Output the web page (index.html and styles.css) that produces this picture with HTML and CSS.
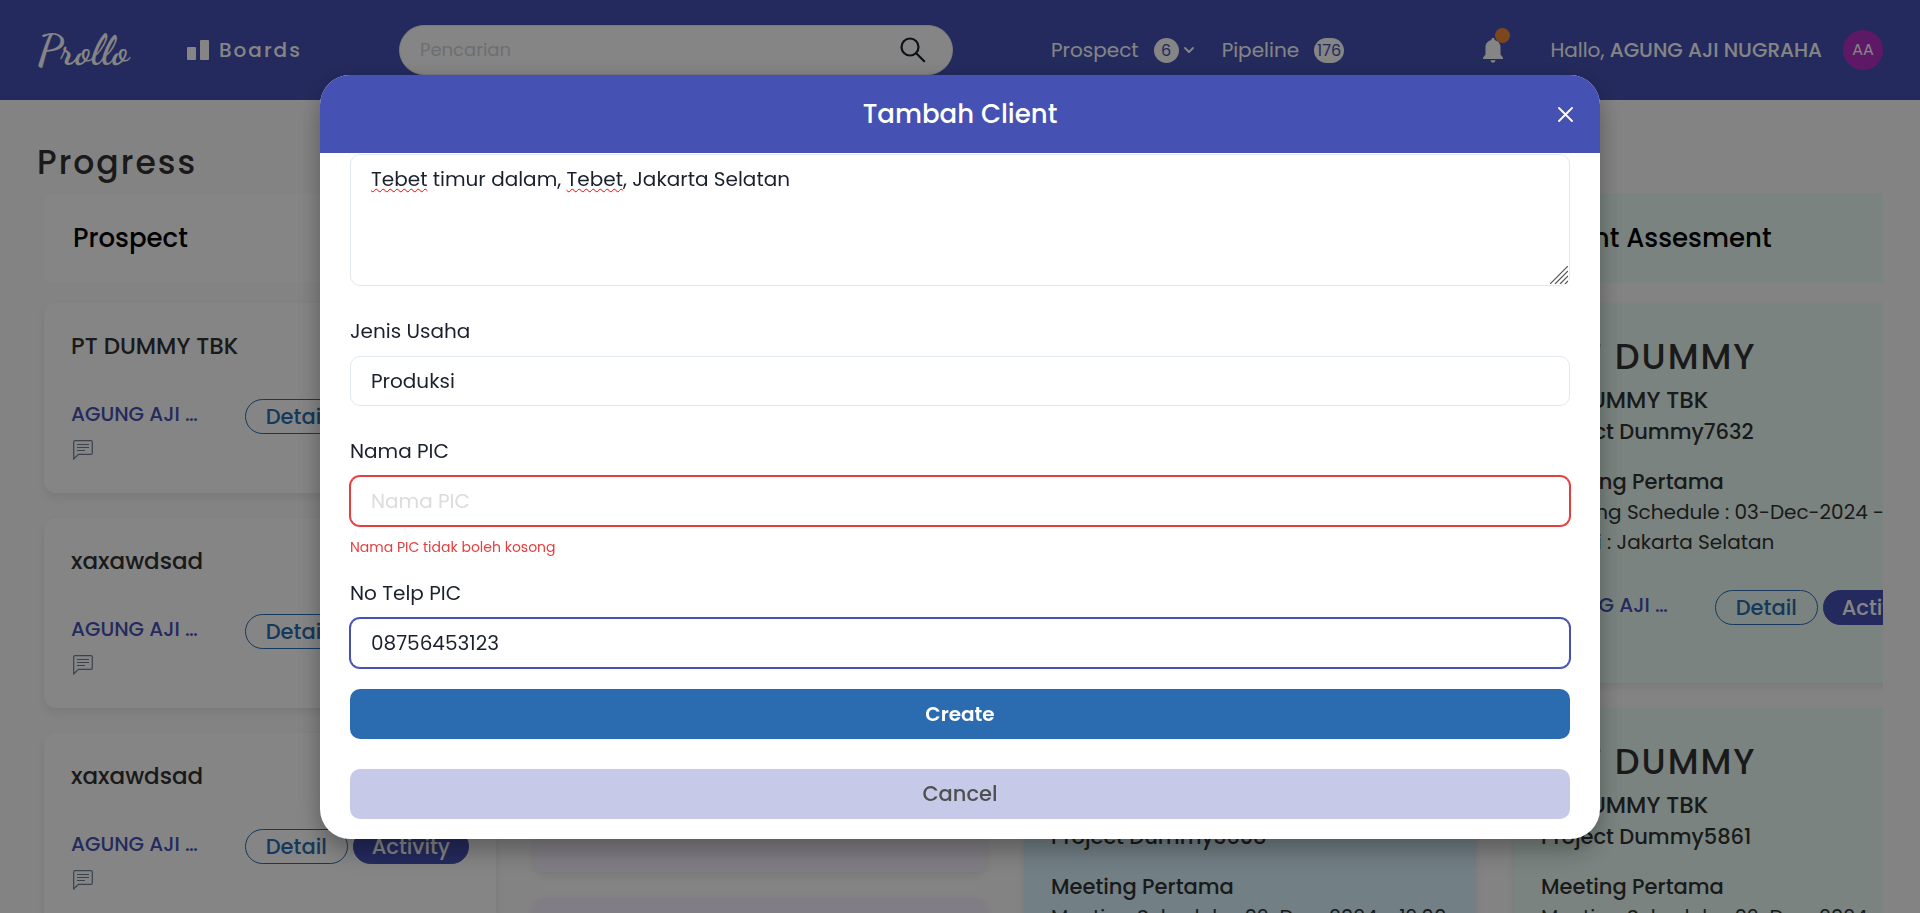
FILE: index.html
```html
<!DOCTYPE html>
<html lang="id">
<head>
<meta charset="utf-8">
<meta name="viewport" content="width=device-width, initial-scale=1">
<title>Prollo</title>
<link rel="stylesheet" href="styles.css">
</head>
<body>
<svg class="sprite" aria-hidden="true">
  <symbol id="comment" viewBox="0 0 20 20">
    <path d="M.7 19V2Q.7.7 2 .7h16q1.300 0 1.300 1.300v11q0 1.300-1.300 1.300H5.500z" fill="none" stroke="currentColor" stroke-width="1.200"/>
    <path d="M4 4.500h12M4 7.500h12M4 10.500h8" stroke="currentColor" stroke-width="1.200"/>
  </symbol>
</svg>

<header class="nav">
  <a class="logo" href="#">Prollo</a>
  <a class="boards" href="#">
    <svg width="22" height="20" viewBox="0 0 22 20" fill="currentColor" aria-hidden="true"><rect x="0" y="7" width="9" height="13" rx="1"/><rect x="13" y="0" width="9" height="20" rx="1"/></svg>
    Boards
  </a>
  <form class="search">
    <input type="search" placeholder="Pencarian" aria-label="Pencarian">
    <button type="button" aria-label="Cari">
      <svg width="26" height="26" viewBox="0 0 26 26" fill="none" stroke="currentColor" stroke-width="2.200" stroke-linecap="round" aria-hidden="true"><circle cx="10" cy="10" r="8.500"/><path d="M16.200 16.200l8 8"/></svg>
    </button>
  </form>
  <nav class="links">
    <a href="#">Prospect <span class="count">6</span>
      <svg width="10" height="6" viewBox="0 0 10 6" fill="none" stroke="currentColor" stroke-width="1.800" stroke-linecap="round" stroke-linejoin="round" aria-hidden="true"><path d="M1 1l4 4 4-4"/></svg>
    </a>
    <a href="#">Pipeline <span class="count">176</span></a>
  </nav>
  <div class="account">
    <button class="bell" type="button" aria-label="Notifikasi">
      <svg width="20" height="25" viewBox="0 0 20 25" fill="currentColor" aria-hidden="true"><path d="M10 0c1 0 1.700.7 1.700 1.700v.2C15 2.700 17.500 5.500 17.500 9v7.500l2 2.500q.5.500.5 2H0q0-1.500.500-2l2-2.500V9C2.500 5.500 5 2.700 8.300 1.900v-.2C8.300.7 9 0 10 0zM7.600 22.300h4.800c0 1.500-1 2.500-2.400 2.500s-2.400-1-2.400-2.500z"/></svg>
      <span class="dot"></span>
    </button>
    <span class="hello">Hallo, <b>AGUNG AJI NUGRAHA</b></span>
    <span class="avatar">AA</span>
  </div>
</header>

<main class="page">
  <h1>Progress</h1>
  <div class="board">
    <section class="col">
      <h2>Prospect</h2>
      <article class="card">
        <h4>PT DUMMY TBK</h4>
        <div class="row"><a href="#">AGUNG AJI …</a><button class="pill">Detail</button><button class="pill solid">Activity</button></div>
        <svg class="note" width="20" height="20"><use href="#comment"/></svg>
      </article>
      <article class="card">
        <h4>xaxawdsad</h4>
        <div class="row"><a href="#">AGUNG AJI …</a><button class="pill">Detail</button><button class="pill solid">Activity</button></div>
        <svg class="note" width="20" height="20"><use href="#comment"/></svg>
      </article>
      <article class="card">
        <h4>xaxawdsad</h4>
        <div class="row"><a href="#">AGUNG AJI …</a><button class="pill">Detail</button><button class="pill solid">Activity</button></div>
        <svg class="note" width="20" height="20"><use href="#comment"/></svg>
      </article>
    </section>
    <section class="col purple">
      <h2></h2>
      <article class="card medium"><svg class="note" width="20" height="20"><use href="#comment"/></svg></article>
      <article class="card medium"><svg class="note" width="20" height="20"><use href="#comment"/></svg></article>
      <article class="card medium"></article>
    </section>
    <section class="col blue">
      <h2></h2>
      <article class="card tall"></article>
      <article class="card tall">
        <h3>PT DUMMY</h3>
        <h4>PT DUMMY TBK</h4>
        <p class="project">Project Dummy3608</p>
        <h5>Meeting Pertama</h5>
        <p>Meeting Schedule : 02-Dec-2024 - 12:00</p>
      </article>
    </section>
    <section class="col green">
      <h2>Client Assesment</h2>
      <article class="card tall">
        <h3>PT DUMMY</h3>
        <h4>PT DUMMY TBK</h4>
        <p class="project">Project Dummy7632</p>
        <h5>Meeting Pertama</h5>
        <p>Meeting Schedule : 03-Dec-2024 - 12:00</p>
        <p>Lokasi : Jakarta Selatan</p>
        <div class="row"><a href="#">AGUNG AJI …</a><button class="pill">Detail</button><button class="pill solid">Activity</button></div>
      </article>
      <article class="card tall">
        <h3>PT DUMMY</h3>
        <h4>PT DUMMY TBK</h4>
        <p class="project">Project Dummy5861</p>
        <h5>Meeting Pertama</h5>
        <p>Meeting Schedule : 02-Dec-2024 - 12:00</p>
      </article>
    </section>
  </div>
</main>

<div class="overlay">
  <div class="modal" role="dialog" aria-modal="true" aria-labelledby="modal-title">
    <div class="modal-head">
      <h2 id="modal-title">Tambah Client</h2>
      <button class="close" type="button" aria-label="Tutup">
        <svg width="15" height="15" viewBox="0 0 15 15" stroke="currentColor" stroke-width="1.800" stroke-linecap="round" aria-hidden="true"><path d="M1 1l13 13M14 1L1 14"/></svg>
      </button>
    </div>
    <form class="modal-body">
      <div class="field area">
        <textarea aria-label="Alamat">Tebet timur dalam, Tebet, Jakarta Selatan</textarea>
        <div class="spelling" aria-hidden="true"><u>Tebet</u> timur dalam, <u>Tebet</u>, Jakarta Selatan</div>
        <svg class="grip" width="18" height="18" viewBox="0 0 18 18" stroke="currentColor" stroke-width="1.200" aria-hidden="true"><path d="M0 18L18 0M5 18L18 5M10 18l8-8M15 18l3-3"/></svg>
      </div>
      <div class="field">
        <label for="usaha">Jenis Usaha</label>
        <input id="usaha" type="text" value="Produksi">
      </div>
      <div class="field invalid">
        <label for="pic">Nama PIC</label>
        <input id="pic" type="text" placeholder="Nama PIC" aria-invalid="true" aria-describedby="pic-error">
        <p id="pic-error" class="error">Nama PIC tidak boleh kosong</p>
      </div>
      <div class="field current">
        <label for="telp">No Telp PIC</label>
        <input id="telp" type="tel" value="08756453123">
      </div>
      <div class="actions">
        <button class="create" type="button">Create</button>
        <button class="cancel" type="button">Cancel</button>
      </div>
    </form>
  </div>
</div>
</body>
</html>
```
FILE: styles.css
```css
* { box-sizing: border-box; margin: 0; }

body {
  height: 100vh;
  overflow: hidden;
  background: #fbfbfb;
  color: #323232;
  font: 400 20px/30px Poppins, Inter, sans-serif;
}

a { color: inherit; text-decoration: none; }
button, input, textarea { font: inherit; color: inherit; }
button { border: 0; padding: 0; background: none; }
.sprite { display: none; }
svg { flex: none; }

/* Navigation */
.nav {
  display: flex;
  align-items: center;
  height: 100px;
  padding: 0 37px;
  background: #4551b3;
  color: #fff;
}
.logo {
  width: 150px;
  font: 700 43px/50px "Dancing Script", "Liberation Serif", serif;
}
.boards {
  display: flex;
  align-items: center;
  gap: 10px;
  width: 212px;
  font-weight: 500;
  letter-spacing: 2px;
}
.search {
  display: flex;
  align-items: center;
  flex: 0 1 554px;
  height: 50px;
  padding: 0 26px 0 20px;
  border: 1px solid #e2e8f0;
  border-radius: 25px;
  background: #fff;
  color: #1a202c;
}
.search input {
  flex: 1;
  min-width: 0;
  border: 0;
  outline: 0;
  padding: 0;
  background: none;
  font-size: 18px;
}
.search input::placeholder { color: #d0d4dc; opacity: 1; }
.search button { display: flex; }
.links {
  display: flex;
  gap: 28px;
  margin-left: 98px;
}
.links a { display: flex; align-items: center; }
.count {
  flex: none;
  min-width: 25px;
  height: 25px;
  margin: 0 5px 0 15px;
  padding: 0 3px;
  border-radius: 13px;
  background: #fff;
  color: #4551b3;
  font-size: 16px;
  line-height: 25px;
  text-align: center;
}
.account { display: flex; align-items: center; margin-left: auto; white-space: nowrap; }
.bell { position: relative; display: flex; margin-right: 47px; color: #fff; }
.dot {
  position: absolute;
  top: -10px;
  right: -7px;
  width: 15px;
  height: 15px;
  border-radius: 50%;
  background: #ed8936;
}
.hello b { font-weight: 500; }
.avatar {
  width: 40px;
  height: 40px;
  margin-left: 21px;
  border-radius: 50%;
  background: #b32fc3;
  font-size: 16px;
  line-height: 40px;
  text-align: center;
}

/* Board */
.page { padding: 38px 37px 0; }
h1 { font-size: 33px; line-height: 50px; font-weight: 500; letter-spacing: 2px; }
.board {
  display: flex;
  gap: 38px;
  height: 725px;
  overflow: hidden;
  padding: 5px 7px;
}
.col { flex: 0 0 452px; display: flex; flex-direction: column; gap: 25px; --tint: #fff; }
.purple { --tint: #f8f0ff; }
.blue { --tint: #daf3ff; }
.green { --tint: #eafcf4; }
.col h2 {
  flex: none;
  height: 90px;
  margin-bottom: -5px;
  padding: 0 29px;
  border-radius: 10px;
  background: var(--tint);
  color: #000;
  font-size: 26px;
  line-height: 90px;
  font-weight: 500;
}
.card {
  flex: none;
  display: flex;
  flex-direction: column;
  height: 190px;
  padding: 27px 27px 33px;
  border-radius: 12px;
  background: var(--tint);
  box-shadow: 0 4px 8px rgba(0, 0, 0, .08);
  white-space: nowrap;
}
.medium { height: 272px; }
.tall { height: 380px; padding-top: 31px; }
.blue > *, .green > * { border-radius: 0; }
.card h3 { padding-left: 18px; font-size: 35px; line-height: 45px; font-weight: 500; letter-spacing: 2px; }
.card h4 { font-size: 23px; line-height: 33px; font-weight: 500; }
.tall h4 { margin-top: 5px; }
.card h5 { margin-top: 20px; font-size: 21px; line-height: 30px; font-weight: 500; }
.project { font-size: 21px; font-weight: 500; }
.row { display: flex; align-items: flex-start; gap: 5px; margin-top: 36px; }
.tall .row { margin-top: 33px; }
.row a { flex: 1; color: #4551b3; font-weight: 500; }
.pill {
  height: 35px;
  padding: 0 20px;
  border: 1px solid #2b6cb0;
  border-radius: 18px;
  color: #2b6cb0;
  font-size: 21px;
  font-weight: 500;
  line-height: 33px;
}
.solid { padding: 0 18px; border-color: #4551b3; background: #4551b3; color: #fff; }
.note { margin: auto 0 0 2px; color: #718096; }

/* Dialog */
.overlay {
  position: fixed;
  inset: 0;
  display: flex;
  justify-content: center;
  align-items: flex-start;
  padding-top: 75px;
  background: rgba(0, 0, 0, .48);
}
.modal {
  width: 1280px;
  max-width: 100%;
  overflow: hidden;
  border-radius: 30px;
  background: #fff;
  color: #1a202c;
  box-shadow: 0 13px 25px rgba(0, 0, 0, .25), 0 0 25px rgba(0, 0, 0, .1);
}
.modal-head {
  display: grid;
  grid-template-columns: 1fr auto 1fr;
  align-items: center;
  height: 78px;
  padding: 0 27px;
  background: #4551b3;
  color: #fff;
}
.modal-head h2 { grid-column: 2; font-size: 26px; line-height: 40px; font-weight: 500; }
.close { grid-column: 3; display: flex; justify-self: end; color: #fff; }
.modal-body { display: flex; flex-direction: column; gap: 30px; padding: 1px 30px 20px; }
.field { display: flex; flex-direction: column; }
.field label { margin-bottom: 10px; }
.field input, .field textarea {
  width: 100%;
  height: 50px;
  padding: 0 20px;
  border: 1px solid #e2e8f0;
  border-radius: 10px;
  outline: 0;
  background: #fff;
}
.field textarea { height: 132px; padding: 9px 20px; resize: none; }
.area { position: relative; }
.spelling {
  position: absolute;
  inset: 10px 21px auto;
  color: transparent;
  pointer-events: none;
}
.spelling u {
  text-decoration: underline wavy #f00 1px;
  text-underline-offset: 2px;
  text-decoration-skip-ink: none;
}
.grip { position: absolute; right: 2px; bottom: 2px; color: #555; }
.field input::placeholder { color: #dcdcdc; opacity: 1; }
.invalid { margin-bottom: -10px; }
.invalid input { border-color: #e53e3e; box-shadow: 0 0 0 1px #e53e3e; }
.current { margin-bottom: -9px; }
.current input { border-color: #4551b3; box-shadow: 0 0 0 1px #4551b3; }
.error { margin-top: 10px; color: #e53e3e; font-size: 14px; line-height: 22px; }
.actions { display: flex; flex-direction: column; gap: 30px; }
.actions button { height: 50px; border-radius: 10px; font-weight: 600; }
.create { background: #2b6cb0; color: #fff; }
.actions .cancel { background: #c7c9e8; color: #505050; font-size: 21px; font-weight: 500; }
```
